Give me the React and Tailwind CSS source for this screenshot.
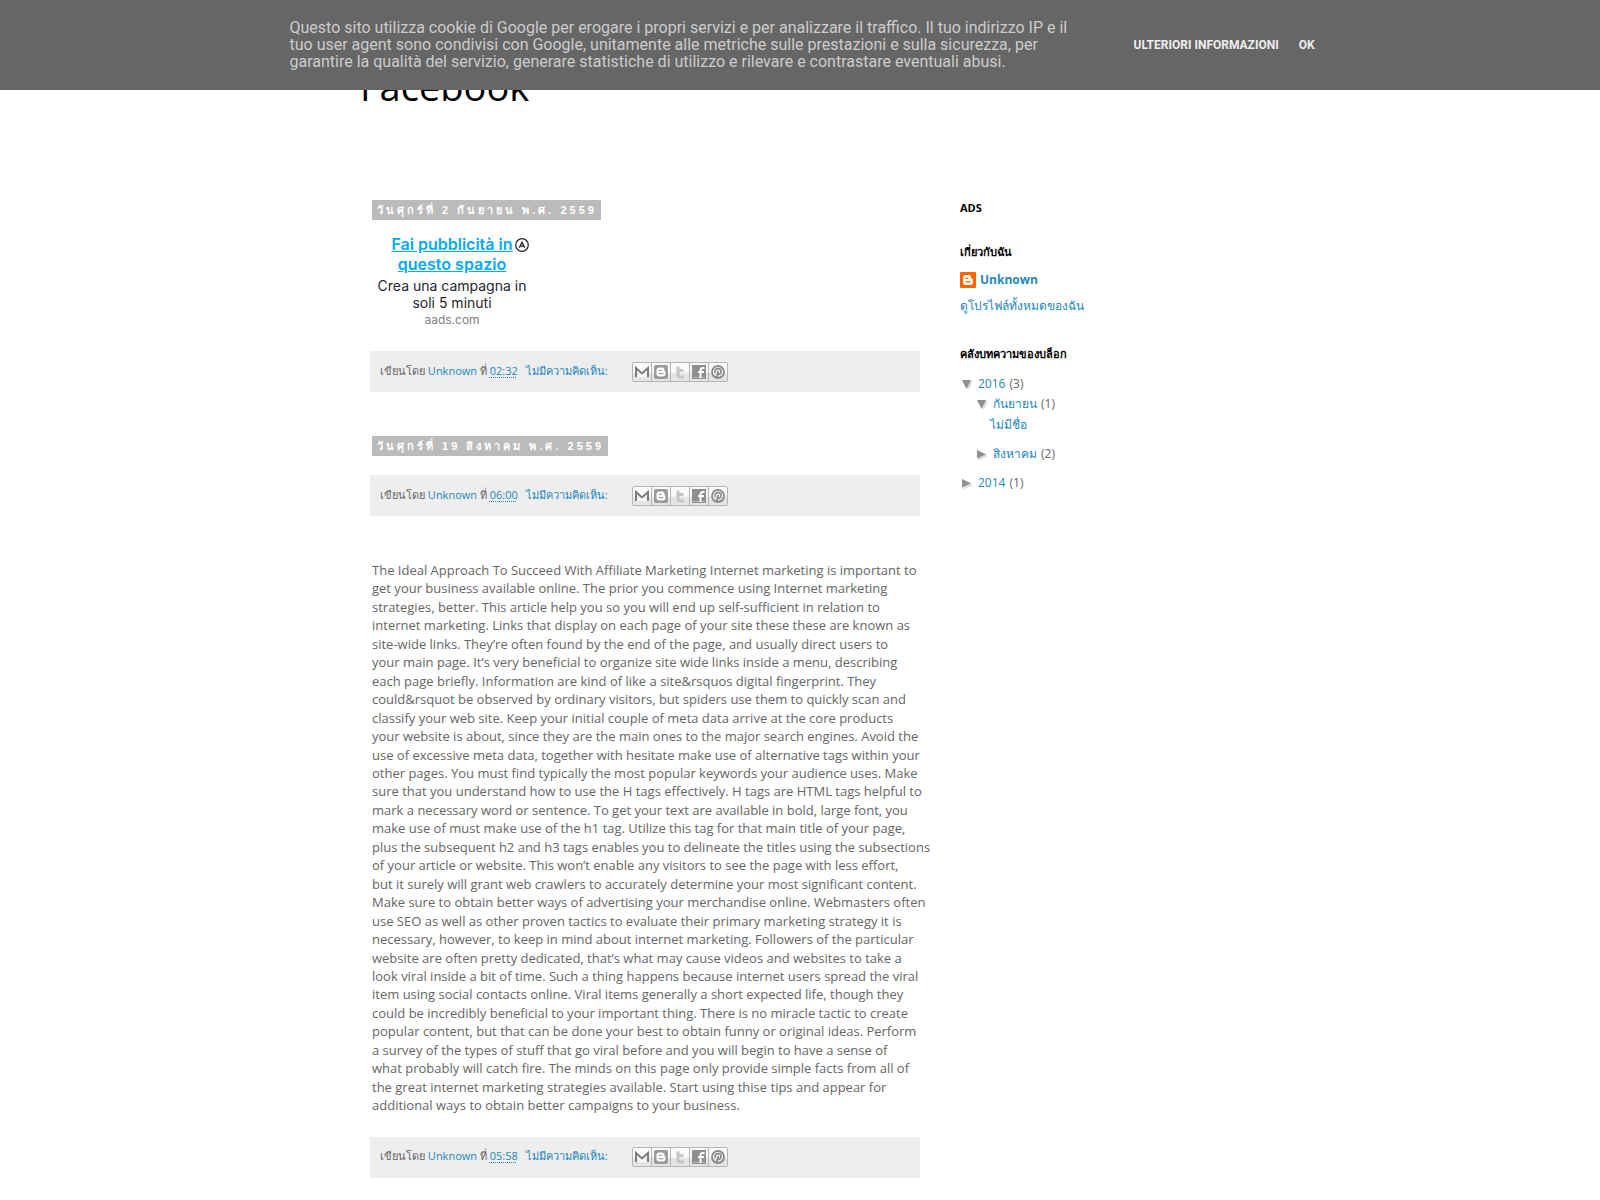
import React from "react";

const TREB = "font-['Trebuchet_MS','Trebuchet','Open_Sans',sans-serif]";

const ARTICLE = [
  "The Ideal Approach To Succeed With Affiliate Marketing Internet marketing is important to",
  "get your business available online. The prior you commence using Internet marketing",
  "strategies, better. This article help you so you will end up self-sufficient in relation to",
  "internet marketing. Links that display on each page of your site these these are known as",
  "site-wide links. They’re often found by the end of the page, and usually direct users to",
  "your main page. It’s very beneficial to organize site wide links inside a menu, describing",
  "each page briefly. Information are kind of like a site&rsquos digital fingerprint. They",
  "could&rsquot be observed by ordinary visitors, but spiders use them to quickly scan and",
  "classify your web site. Keep your initial couple of meta data arrive at the core products",
  "your website is about, since they are the main ones to the major search engines. Avoid the",
  "use of excessive meta data, together with hesitate make use of alternative tags within your",
  "other pages. You must find typically the most popular keywords your audience uses. Make",
  "sure that you understand how to use the H tags effectively. H tags are HTML tags helpful to",
  "mark a necessary word or sentence. To get your text are available in bold, large font, you",
  "make use of must make use of the h1 tag. Utilize this tag for that main title of your page,",
  "plus the subsequent h2 and h3 tags enables you to delineate the titles using the subsections",
  "of your article or website. This won’t enable any visitors to see the page with less effort,",
  "but it surely will grant web crawlers to accurately determine your most significant content.",
  "Make sure to obtain better ways of advertising your merchandise online. Webmasters often",
  "use SEO as well as other proven tactics to evaluate their primary marketing strategy it is",
  "necessary, however, to keep in mind about internet marketing. Followers of the particular",
  "website are often pretty dedicated, that’s what may cause videos and websites to take a",
  "look viral inside a bit of time. Such a thing happens because internet users spread the viral",
  "item using social contacts online. Viral items generally a short expected life, though they",
  "could be incredibly beneficial to your important thing. There is no miracle tactic to create",
  "popular content, but that can be done your best to obtain funny or original ideas. Perform",
  "a survey of the types of stuff that go viral before and you will begin to have a sense of",
  "what probably will catch fire. The minds on this page only provide simple facts from all of",
  "the great internet marketing strategies available. Start using thise tips and appear for",
  "additional ways to obtain better campaigns to your business.",
].join("\n");

const SHARE_ICONS = [
  {
    label: "Email",
    art: (
      <>
        <path d="M3 5h14v10H3z" fill="#fafafa" />
        <path d="M3 15l5-5M17 15l-5-5" stroke="#d8d8d8" />
        <path d="M4 15V6l6 5.5L16 6v9" fill="none" stroke="#7d7d7d" strokeWidth="2" />
      </>
    ),
  },
  {
    label: "BlogThis!",
    art: (
      <>
        <rect x="3" y="3" width="14" height="14" rx="2" fill="#9b9b9b" />
        <path d="M8.500 5.500h2.500a2.500 2.500 0 0 1 2.500 2.500v1c0 .5 1 .3 1 1.200v1.300a3 3 0 0 1-3 3h-3a3 3 0 0 1-3-3V8.500a3 3 0 0 1 3-3z" fill="#fff" />
        <path d="M8.300 8.300h2M8.300 11.700h3.500" stroke="#9b9b9b" strokeWidth="1.200" strokeLinecap="round" />
      </>
    ),
  },
  {
    label: "Twitter",
    art: (
      <path d="M8 4.500v8a2.500 2.500 0 0 0 2.500 2.500H14M8 8.500h5.500" fill="none" stroke="#c6c6c6" strokeWidth="3" strokeLinejoin="round" />
    ),
  },
  {
    label: "Facebook",
    art: (
      <>
        <rect x="3" y="3" width="14" height="14" fill="#8f8f91" />
        <path d="M4 15.500h12" stroke="#b5b5b5" />
        <path d="M11.500 16V8.500c0-1.700.8-2.500 2.300-2.500H15.500M9 10h6" fill="none" stroke="#fff" strokeWidth="2" />
      </>
    ),
  },
  {
    label: "Pinterest",
    art: (
      <>
        <circle cx="10" cy="10" r="6" fill="none" stroke="#8a8a8a" strokeWidth="1.800" />
        <path d="M7.300 11c-1-2.800.8-4.300 2.900-4.300s3.300 1.400 2.800 3.300c-.5 2.200-2.300 2.500-3.200 1.400M10.300 8.800L8.700 16" fill="none" stroke="#8a8a8a" strokeWidth="1.700" />
      </>
    ),
  },
];

function Link({ children, className = "" }) {
  return (
    <a href="#" className={`text-[#2288bb] ${className}`}>
      {children}
    </a>
  );
}

function ShareButtons() {
  return (
    <div className="flex h-5 overflow-hidden rounded-xs border border-[#b5b5b5]">
      {SHARE_ICONS.map(({ label, art }) => (
        <a
          key={label}
          href="#"
          aria-label={label}
          className="flex h-[18px] w-[19px] items-center justify-center border-r border-[#b5b5b5] bg-linear-to-b from-[#fafafa] from-50% to-[#e4e4e4] to-60% last:w-[18px] last:border-r-0"
        >
          <svg viewBox="1 1 18 18" className="size-[18px] shrink-0">
            {art}
          </svg>
        </a>
      ))}
    </div>
  );
}

function PostFooter({ time }) {
  return (
    <footer className="-mx-0.5 flex h-[41px] items-center bg-[#eeeeee] pl-2.5 text-[11px] leading-4">
      <span className="-mt-0.5 whitespace-pre">
        เขียนโดย <Link>Unknown</Link> ที่{" "}
        <Link>
          <abbr title={time} className="underline decoration-dotted underline-offset-2">
            {time}
          </abbr>
        </Link>
      </span>
      <Link className="-mt-0.5 mr-6 ml-2">ไม่มีความคิดเห็น:</Link>
      <ShareButtons />
    </footer>
  );
}

function DateHeader({ children }) {
  return (
    <h2 className="flex">
      <span className="bg-[#bbbbbb] pr-1 pl-[5px] font-['Liberation_Sans',sans-serif] text-[11px] leading-5 font-bold tracking-[3px] text-white">
        {children}
      </span>
    </h2>
  );
}

function AdBlock() {
  return (
    <div className="mt-3.5 flex w-40 flex-col text-center font-['Inter',sans-serif]">
      <div className="relative">
        <a href="#" className="block px-4 text-[16px] leading-5 font-semibold text-[#03a9f4] underline">
          Fai pubblicità in questo spazio
        </a>
        <svg viewBox="0 0 14 14" className="absolute top-1 right-[3px] size-3.5">
          <circle cx="7" cy="7" r="6.300" fill="none" stroke="#222" strokeWidth="1.200" />
          <path d="M4.300 9.800L7 4.200l2.700 5.600M5.300 8.200h3.400" fill="none" stroke="#222" strokeWidth="1.300" />
        </svg>
      </div>
      <p className="mt-[3px] text-[14px] leading-[17px] text-[#27272f]">Crea una campagna in soli 5 minuti</p>
      <p className="mt-px text-[12px] leading-4 text-[#808080]">aads.com</p>
    </div>
  );
}

function Arrow({ open }) {
  return (
    <svg viewBox="0 0 14 12" className="mr-1 h-3 w-3.5 shrink-0">
      {open ? (
        <>
          <path d="M4 3h9L8.500 12z" fill="#dddddd" />
          <path d="M2 2h9L6.500 11z" fill="#8f8f8f" />
        </>
      ) : (
        <>
          <path d="M3 3.500v9L13 8z" fill="#dddddd" />
          <path d="M2 2v8.500l9-4.200z" fill="#8f8f8f" />
        </>
      )}
    </svg>
  );
}

function ArchiveRow({ open, label, count, className = "" }) {
  return (
    <div className={`flex items-center leading-5 ${className}`}>
      <Arrow open={open} />
      <Link className="mr-1">{label}</Link>
      <span>({count})</span>
    </div>
  );
}

function Sidebar() {
  return (
    <aside className="flex w-[280px] flex-col text-[12px]">
      <h2 className="text-[11px] leading-4 font-bold text-black">ADS</h2>
      <h2 className="mt-7 text-[11px] leading-4 font-bold text-black">เกี่ยวกับฉัน</h2>
      <div className="mt-3 flex items-center gap-1 leading-4">
        <svg viewBox="0 0 16 16" className="size-4">
          <rect width="16" height="16" rx="1" fill="#ff6600" />
          <path d="M6 3h2.500a2.500 2.500 0 0 1 2.500 2.500c0 1.500 2 .8 2 2V10a3 3 0 0 1-3 3H6a3 3 0 0 1-3-3V6a3 3 0 0 1 3-3z" fill="#fff" />
          <path d="M6 6.300h2M6 9.700h4" stroke="#ff6600" strokeWidth="1.300" strokeLinecap="round" />
        </svg>
        <Link className="font-bold">Unknown</Link>
      </div>
      <Link className="mt-2.5 leading-4">ดูโปรไฟล์ทั้งหมดของฉัน</Link>
      <h2 className="mt-8 text-[11px] leading-4 font-bold text-black">คลังบทความของบล็อก</h2>
      <nav className="mt-3">
        <ArchiveRow open label="2016" count="3" />
        <ArchiveRow open label="กันยายน" count="1" className="ml-[15px]" />
        <div className="ml-[30px] leading-[22px]">
          <Link>ไม่มีชื่อ</Link>
        </div>
        <ArchiveRow label="สิงหาคม" count="2" className="mt-2 ml-[15px]" />
        <ArchiveRow label="2014" count="1" className="mt-[9px]" />
      </nav>
    </aside>
  );
}

function CookieBanner() {
  return (
    <div className="fixed inset-x-0 top-0 z-10 bg-[#666666] font-['Roboto',sans-serif]">
      <div className="mx-auto flex max-w-[1045px] items-center pt-[19px] pb-5 pl-3 text-[#cccccc]">
        <p className="w-[800px] text-[16px] leading-[17px]">
          Questo sito utilizza cookie di Google per erogare i propri servizi e per analizzare il traffico. Il tuo
          indirizzo IP e il tuo user agent sono condivisi con Google, unitamente alle metriche sulle prestazioni e sulla
          sicurezza, per garantire la qualità del servizio, generare statistiche di utilizzo e rilevare e contrastare
          eventuali abusi.
        </p>
        <div className="ml-11 flex shrink-0 gap-5 text-[12px] leading-4 font-bold text-[#eeeeee]">
          <a href="#">ULTERIORI INFORMAZIONI</a>
          <button type="button">OK</button>
        </div>
      </div>
    </div>
  );
}

export default function App() {
  return (
    <div className={`min-h-screen bg-white text-[#666666] ${TREB}`}>
      <CookieBanner />
      <div className="mx-auto w-full max-w-[880px] pb-5">
        <header className="h-[200px] pt-[60px]">
          <h1 className="text-[38px] leading-[52px] text-black">Facebook</h1>
        </header>
        <div className="flex justify-between">
          <main className="ml-3 w-[546px]">
            <article>
              <DateHeader>วันศุกร์ที่ 2 กันยายน พ.ศ. 2559</DateHeader>
              <AdBlock />
              <div className="mt-[23px]">
                <PostFooter time="02:32" />
              </div>
            </article>
            <article className="mt-11">
              <DateHeader>วันศุกร์ที่ 19 สิงหาคม พ.ศ. 2559</DateHeader>
              <div className="mt-[19px]">
                <PostFooter time="06:00" />
              </div>
            </article>
            <article className="mt-[45px]">
              <p className="text-[13px] leading-[1.42] whitespace-pre">{ARTICLE}</p>
              <div className="mt-[22px]">
                <PostFooter time="05:58" />
              </div>
            </article>
          </main>
          <Sidebar />
        </div>
      </div>
    </div>
  );
}
